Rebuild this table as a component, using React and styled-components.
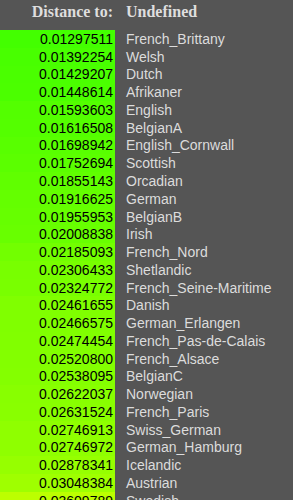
import React from "react"
import styled, { createGlobalStyle } from "styled-components"

const GlobalStyle = createGlobalStyle`
  html, body {
    margin: 0;
    padding: 0;
    height: 500px;
    overflow: hidden;
    background: #555555;
  }
`

const rows = [
  ["0.01297511", "French_Brittany"],
  ["0.01392254", "Welsh"],
  ["0.01429207", "Dutch"],
  ["0.01448614", "Afrikaner"],
  ["0.01593603", "English"],
  ["0.01616508", "BelgianA"],
  ["0.01698942", "English_Cornwall"],
  ["0.01752694", "Scottish"],
  ["0.01855143", "Orcadian"],
  ["0.01916625", "German"],
  ["0.01955953", "BelgianB"],
  ["0.02008838", "Irish"],
  ["0.02185093", "French_Nord"],
  ["0.02306433", "Shetlandic"],
  ["0.02324772", "French_Seine-Maritime"],
  ["0.02461655", "Danish"],
  ["0.02466575", "German_Erlangen"],
  ["0.02474454", "French_Pas-de-Calais"],
  ["0.02520800", "French_Alsace"],
  ["0.02538095", "BelgianC"],
  ["0.02622037", "Norwegian"],
  ["0.02631524", "French_Paris"],
  ["0.02746913", "Swiss_German"],
  ["0.02746972", "German_Hamburg"],
  ["0.02878341", "Icelandic"],
  ["0.03048384", "Austrian"],
  ["0.03609789", "Swedish"],
]

const Table = styled.div`
  display: grid;
  grid-template-columns: 115px 1fr;
  grid-auto-rows: 17.77px;
  font-family: "Liberation Sans", Arial, sans-serif;
  font-size: 14px;
  color: #dcdcdc;
`

const HeadCell = styled.div`
  height: 30px;
  padding-bottom: 6px;
  box-sizing: border-box;
  display: flex;
  align-items: center;
  justify-content: ${props => (props.right ? "flex-end" : "flex-start")};
  padding-right: ${props => (props.right ? "2px" : "0")};
  padding-left: ${props => (props.right ? "0" : "11px")};
  font-weight: bold;
  color: #dedede;
`

const HeadRow = styled.div`
  grid-column: 1 / -1;
  display: grid;
  grid-template-columns: 115px 1fr;
  height: 30px;
`

const Value = styled.div`
  display: flex;
  align-items: center;
  justify-content: flex-end;
  padding-right: 2px;
  color: #000;
  line-height: 1;
`

const Name = styled.div`
  display: flex;
  align-items: center;
  padding-left: 11px;
  line-height: 1;
  white-space: nowrap;
`

const heat = value => {
  const r = Math.min(255, Math.round(parseFloat(value) * 5200))
  return `rgb(${r}, 255, 0)`
}

const App = () => {
  return (
    <>
      <GlobalStyle />
      <HeadRow>
        <HeadCell right>Distance to:</HeadCell>
        <HeadCell>Undefined</HeadCell>
      </HeadRow>
      <Table>
        {rows.map(([value, name]) => (
          <React.Fragment key={name}>
            <Value style={{ background: heat(value) }}>{value}</Value>
            <Name>{name}</Name>
          </React.Fragment>
        ))}
      </Table>
    </>
  )
}

export default App
